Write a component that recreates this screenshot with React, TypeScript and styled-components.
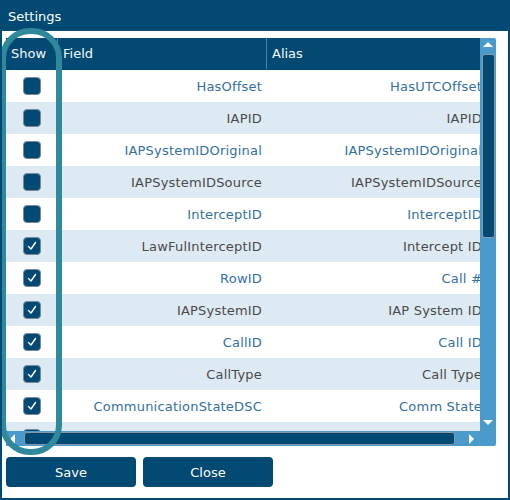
import React from "react";
import styled, { createGlobalStyle } from "styled-components";

const DARK = "#024a73";
const LIGHT_ROW = "#ddeaf4";
const SCROLL = "#4a9bcb";
const TEAL = "#2f889b";

const Global = createGlobalStyle`
  html, body { margin: 0; padding: 0; background: #fff; }
  body { font-family: "DejaVu Sans", "Open Sans", sans-serif; }
  * { box-sizing: border-box; }
`;

const Dialog = styled.div`
  position: relative;
  width: 510px;
  height: 500px;
  border: 2px solid ${DARK};
  background: #fff;
  display: flex;
  flex-direction: column;
  overflow: hidden;
`;

const TitleBar = styled.div`
  height: 29px;
  background: ${DARK};
  color: #fff;
  font-size: 13px;
  display: flex;
  align-items: center;
  padding-left: 6px;
`;

const Body = styled.div`
  padding: 7px 0 0 4px;
  display: flex;
  flex-direction: column;
  gap: 11px;
`;

const GridFrame = styled.div`
  width: 490px;
  height: 408px;
  display: flex;
`;

const LeftPane = styled.div`
  width: 474px;
  display: flex;
  flex-direction: column;
`;

const Viewport = styled.div`
  flex: 1;
  overflow: hidden;
`;

const HeaderRow = styled.div`
  display: flex;
  height: 32px;
  background: ${DARK};
  border-bottom: 1px solid ${DARK};
`;

const HeaderCell = styled.div<{ $w: number; $divider?: boolean }>`
  flex: 0 0 ${(p) => p.$w}px;
  color: #f4f8fb;
  font-size: 13px;
  font-weight: 400;
  display: flex;
  align-items: center;
  padding-left: 5px;
  border-left: ${(p) => (p.$divider ? "1px solid #3d86b8" : "none")};
`;

const Row = styled.div<{ $alt: boolean }>`
  display: flex;
  height: 32px;
  background: ${(p) => (p.$alt ? LIGHT_ROW : "#fff")};
  color: ${(p) => (p.$alt ? "#4a4a4a" : "#33709f")};
  font-size: 13px;
  letter-spacing: 0.2px;
`;

const CheckCell = styled.div`
  flex: 0 0 51px;
  display: flex;
  align-items: center;
  justify-content: center;
`;

const TextCell = styled.div<{ $w: number }>`
  flex: 0 0 ${(p) => p.$w}px;
  display: flex;
  align-items: center;
  justify-content: flex-end;
  padding-right: 4px;
  white-space: nowrap;
`;

const Box = styled.div`
  width: 18px;
  height: 18px;
  border-radius: 4px;
  background: ${DARK};
  border: 1px solid #7a8a96;
  display: flex;
  align-items: center;
  justify-content: center;
`;

const HScroll = styled.div`
  height: 15px;
  background: ${SCROLL};
  display: flex;
  align-items: center;
`;

const HThumb = styled.div`
  width: 431px;
  height: 13px;
  margin-left: 2px;
  background: ${DARK};
  border: 1px solid #8a98a4;
  border-radius: 3px;
`;

const ArrowBox = styled.div<{ $w: number; $h: number }>`
  flex: 0 0 auto;
  width: ${(p) => p.$w}px;
  height: ${(p) => p.$h}px;
  display: flex;
  align-items: center;
  justify-content: center;
`;

const VScroll = styled.div`
  width: 16px;
  background: ${SCROLL};
  display: flex;
  flex-direction: column;
  align-items: center;
  border-radius: 0 2px 2px 0;
`;

const VThumb = styled.div`
  width: 13px;
  height: 184px;
  background: ${DARK};
  border: 1px solid #8a98a4;
  border-radius: 3px;
`;

const Spacer = styled.div`
  flex: 1;
`;

const Buttons = styled.div`
  display: flex;
  gap: 7px;
`;

const Button = styled.button`
  width: 130px;
  height: 30px;
  background: ${DARK};
  color: #fff;
  border: none;
  border-radius: 4px;
  font-family: inherit;
  font-size: 13px;
  padding: 0;
`;

const Highlight = styled.div`
  position: absolute;
  left: -2px;
  top: 26px;
  width: 62px;
  height: 427px;
  border: 6px solid ${TEAL};
  border-radius: 30px;
  pointer-events: none;
`;

const rows: [string, string, boolean][] = [
  ["HasOffset", "HasUTCOffset", false],
  ["IAPID", "IAPID", false],
  ["IAPSystemIDOriginal", "IAPSystemIDOriginal", false],
  ["IAPSystemIDSource", "IAPSystemIDSource", false],
  ["InterceptID", "InterceptID", false],
  ["LawFulInterceptID", "Intercept ID", true],
  ["RowID", "Call #", true],
  ["IAPSystemID", "IAP System ID", true],
  ["CallID", "Call ID", true],
  ["CallType", "Call Type", true],
  ["CommunicationStateDSC", "Comm State", true],
  ["CommunicationType", "Comm Type", true],
];

const Check = () => (
  <svg width="12" height="12" viewBox="0 0 12 12">
    <polyline points="2.5,6.5 5,9 9.5,2.5" fill="none" stroke="#fff" strokeWidth="1.4" strokeLinecap="round" strokeLinejoin="round" />
  </svg>
);

const Tri = ({ dir }: { dir: "up" | "down" | "left" | "right" }) => {
  const pts = {
    up: "1,7 6,2 11,7",
    down: "1,3 6,8 11,3",
    left: "7,1 2,6 7,11",
    right: "3,1 8,6 3,11",
  }[dir];
  return (
    <svg width="12" height="12" viewBox="0 0 12 12">
      <polygon points={pts} fill="#fff" />
    </svg>
  );
};

export default function App() {
  return (
    <>
      <Global />
      <Dialog>
        <TitleBar>Settings</TitleBar>
        <Body>
          <GridFrame>
            <LeftPane>
              <Viewport>
                <HeaderRow>
                  <HeaderCell $w={51}>Show</HeaderCell>
                  <HeaderCell $w={209} $divider>Field</HeaderCell>
                  <HeaderCell $w={220} $divider>Alias</HeaderCell>
                </HeaderRow>
                {rows.map(([f, a, c], i) => (
                  <Row key={f} $alt={i % 2 === 1}>
                    <CheckCell>
                      <Box>{c && <Check />}</Box>
                    </CheckCell>
                    <TextCell $w={209}>{f}</TextCell>
                    <TextCell $w={220}>{a}</TextCell>
                  </Row>
                ))}
              </Viewport>
              <HScroll>
                <ArrowBox $w={16} $h={15}>
                  <Tri dir="left" />
                </ArrowBox>
                <HThumb />
                <Spacer />
                <ArrowBox $w={16} $h={15}>
                  <Tri dir="right" />
                </ArrowBox>
              </HScroll>
            </LeftPane>
            <VScroll>
              <ArrowBox $w={16} $h={16}>
                <Tri dir="up" />
              </ArrowBox>
              <VThumb />
              <Spacer />
              <ArrowBox $w={16} $h={14}>
                <Tri dir="down" />
              </ArrowBox>
              <ArrowBox $w={16} $h={16} />
            </VScroll>
          </GridFrame>
          <Buttons>
            <Button>Save</Button>
            <Button>Close</Button>
          </Buttons>
        </Body>
        <Highlight />
      </Dialog>
    </>
  );
}
